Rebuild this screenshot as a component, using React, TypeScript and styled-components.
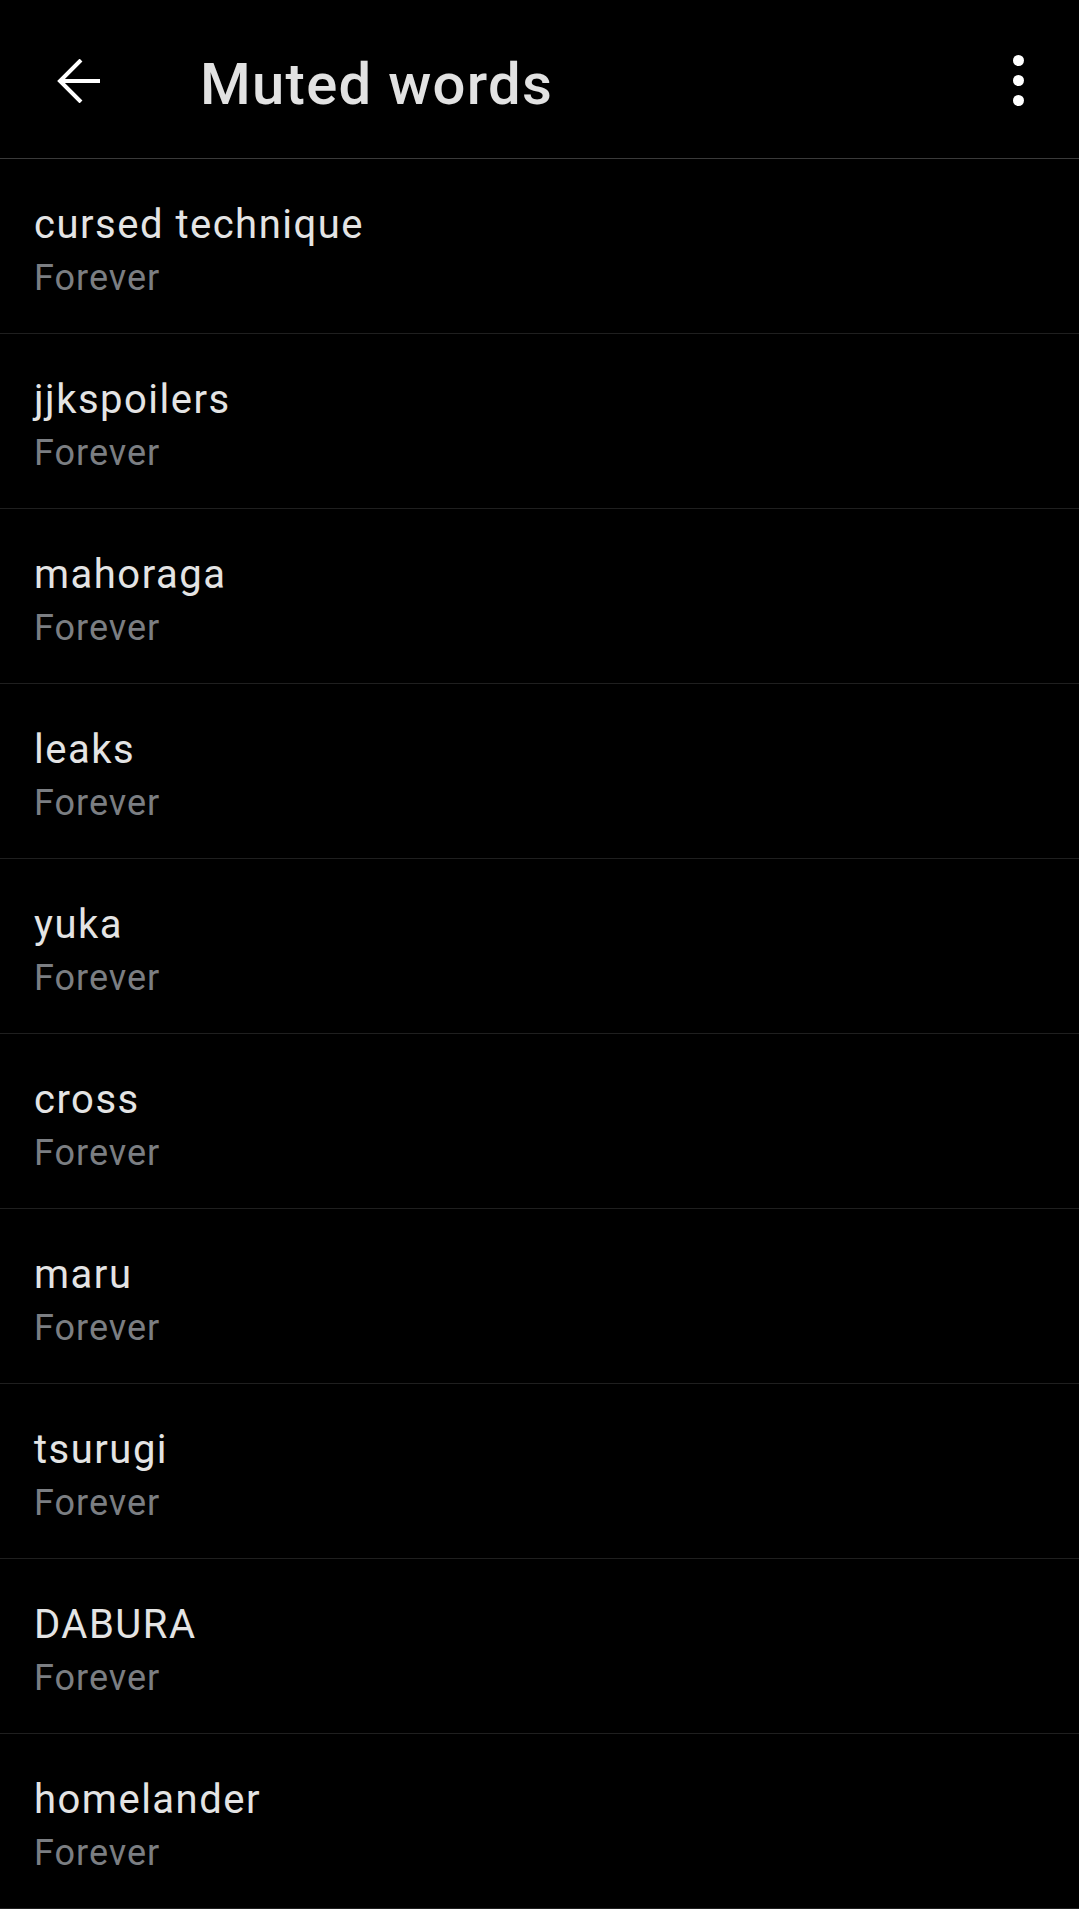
import React from "react";
import styled, { createGlobalStyle } from "styled-components";

const Global = createGlobalStyle`
  html, body { margin: 0; padding: 0; background: #000; }
  body { font-family: Roboto, "Noto Sans", "Liberation Sans", sans-serif; }
  * { box-sizing: border-box; }
`;

const Page = styled.div`
  width: 1079px;
  min-height: 1909px;
  background: #000;
  display: flex;
  flex-direction: column;
`;

const Header = styled.header`
  height: 159px;
  display: flex;
  align-items: center;
  padding: 0 55px 0 57px;
  border-bottom: 1px solid #3a3a3a;
`;

const BackButton = styled.button`
  width: 44px;
  height: 44px;
  padding: 0;
  border: 0;
  background: transparent;
  display: flex;
  align-items: center;
  justify-content: center;
  margin-top: 3px;
`;

const Title = styled.h1`
  flex: 1;
  margin: 0 0 0 99px;
  font-size: 58px;
  font-weight: 500;
  letter-spacing: 1.3px;
  color: #e2e2e2;
  line-height: 1;
  padding-top: 9px;
`;

const Kebab = styled.button`
  width: 11px;
  padding: 0;
  border: 0;
  background: transparent;
  display: flex;
  flex-direction: column;
  gap: 9px;
  margin-top: 2px;
`;

const Dot = styled.span`
  width: 11px;
  height: 11px;
  border-radius: 50%;
  background: #fff;
`;

const List = styled.ul`
  list-style: none;
  margin: 0;
  padding: 0;
`;

const Row = styled.li`
  height: 175px;
  padding: 40px 34px 0 34px;
  border-bottom: 1px solid #1f1f1f;
  display: flex;
  flex-direction: column;
`;

const Word = styled.div`
  font-size: 40px;
  line-height: 52px;
  letter-spacing: 1.5px;
  color: #e4e4e4;
`;

const Duration = styled.div`
  font-size: 36px;
  line-height: 54px;
  letter-spacing: 1px;
  color: #7b7e82;
`;

const words = [
  "cursed technique",
  "jjkspoilers",
  "mahoraga",
  "leaks",
  "yuka",
  "cross",
  "maru",
  "tsurugi",
  "DABURA",
  "homelander",
];

export default function App() {
  return (
    <Page>
      <Global />
      <Header>
        <BackButton aria-label="Back">
          <svg width="44" height="44" viewBox="0 0 44 44" fill="none">
            <path
              d="M43 22H3M24 1L3 22L24 43"
              stroke="#fff"
              strokeWidth="4"
              strokeLinecap="butt"
              strokeLinejoin="miter"
            />
          </svg>
        </BackButton>
        <Title>Muted words</Title>
        <Kebab aria-label="More">
          <Dot />
          <Dot />
          <Dot />
        </Kebab>
      </Header>
      <List>
        {words.map((w) => (
          <Row key={w}>
            <Word>{w}</Word>
            <Duration>Forever</Duration>
          </Row>
        ))}
      </List>
    </Page>
  );
}
